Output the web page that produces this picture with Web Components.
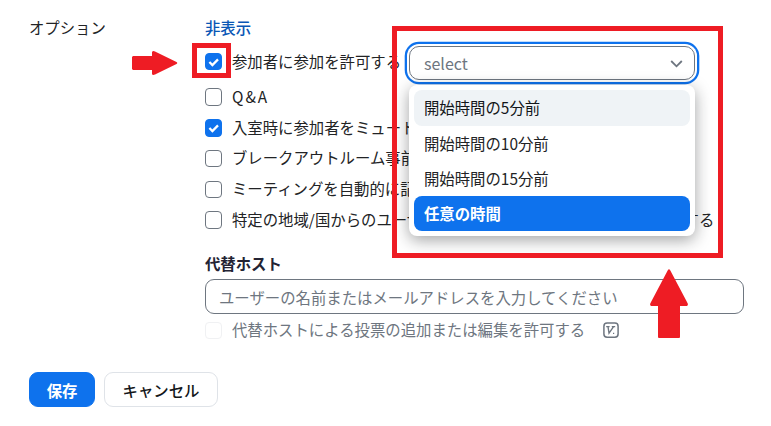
<!DOCTYPE html>
<html lang="ja">
<head>
<meta charset="utf-8">
<title>オプション</title>
<style>
html,body{margin:0;width:771px;height:426px;overflow:hidden;background:#fff}
body{font:15.38px/24px "Noto Sans CJK JP","Noto Sans",sans-serif;color:#222325}
</style>
</head>
<body>
<meeting-options></meeting-options>
<script>
const define = (name, html, init) => customElements.define(name, class extends HTMLElement {
  constructor() {
    super();
    this.attachShadow({mode: 'open'}).innerHTML = html;
    if (init) init.call(this);
  }
});

define('check-row', `<style>
:host{display:flex;align-items:flex-start;height:23px;white-space:nowrap}
.box{box-sizing:border-box;width:17px;height:17px;margin-top:3px;border:1px solid #6e7680;border-radius:4px;background:#fff;margin-right:10px;flex:none}
:host([tall]) .box{height:18px}
svg{display:none;width:17px;height:18px;margin:-1px}
:host([checked]) .box{background:#0e72ed;border-color:#0e72ed}
:host([checked]) svg{display:block}
:host([disabled]){color:#6e7680}
:host([disabled]) .box{border-color:#f0f1f3}
:host([spaced]) .label{letter-spacing:2px}
.label{display:flex;align-items:center;height:24px;margin-top:var(--lift,-1px)}
</style><div class="box"><svg viewBox="0 0 17 18"><path d="M4.4 9 7.4 12 13 6.4" fill="none" stroke="#fff" stroke-width="2.3"/></svg></div><span class="label"><slot></slot></span>`);

define('option-item', `<style>
:host{display:flex;align-items:center;box-sizing:border-box;height:35px;padding:0 10px 1px;border-radius:8px;color:#222325}
:host([hover]){height:36px;padding-bottom:2px;background:#eff3f6;color:#131619}
:host([selected]){background:#0e72ed;color:#fff;font-weight:700}
</style><slot></slot>`);

define('time-select', `<style>
:host{display:block;width:286px}
.field{box-sizing:border-box;height:34px;border:1px solid #6e7680;border-radius:10px;box-shadow:0 0 0 2px #fff,0 0 0 4.3px #0e72ed;background:#fff;display:flex;align-items:center;justify-content:space-between;padding:2px 11px 0 14px;color:#6e7680}
.word{font:16px/24px "Noto Sans CJK JP",sans-serif;margin-top:-2px}
.list{margin-top:5px;box-sizing:border-box;height:151px;border-radius:8px;padding:5px;background:#fff;box-shadow:0 4px 16px rgba(19,22,25,.4)}
</style>
<div class="field"><span class="word">select</span><svg width="13" height="12" viewBox="0 0 13 12"><path d="M1.2 3 6.5 8.3 11.8 3" fill="none" stroke="#6e7680" stroke-width="1.8"/></svg></div>
<div class="list"><slot></slot></div>`);

define('text-field', `<style>
:host{display:flex;align-items:center;box-sizing:border-box;width:539px;height:35px;border:1px solid #6e7680;border-radius:9px;padding:1px 13px 0;color:#6e7680}
</style><slot></slot>`);

define('ui-button', `<style>
:host{display:flex;align-items:center;justify-content:center;box-sizing:border-box;height:35px;padding-top:1px;border-radius:9px;border:1px solid #dfe3e8;width:114px;font-weight:500;color:#131619}
:host([primary]){width:66px;background:#0e72ed;border-color:#0e72ed;color:#fff;font-weight:700}
</style><slot></slot>`);

define('version-icon', `<style>:host{display:block;margin:2px 0 0 18px}svg{display:block}</style>
<svg width="16" height="16" viewBox="0 0 16 16" fill="none" stroke="#6e7680"><rect x=".9" y="1" width="14.2" height="14.2" rx="3.2" stroke-width="1.5"/><path d="M3.2 4.6H6.6M5 4.6 6 11.2 10.6 4.6M8.8 4.6H12.2" stroke-width="1.35"/><path d="M10 11.4h1.2" stroke-width="1.1"/></svg>`);

define('callout-box', `<style>:host{display:block;box-sizing:border-box;border:5px solid #ee1c24;pointer-events:none}</style>`);

define('callout-arrow', `<style>
:host{display:block}svg{display:none}
:host([to=right]) .r,:host([to=up]) .u{display:block}
</style>
<svg class="r" width="46" height="24" fill="#ee1c24"><path d="M1 5H20V1Q21-.5 23 .5L44.5 11Q46 12 44.5 13L23 23.5Q20.5 24.5 20 23V19H1L0 18V6Z"/></svg>
<svg class="u" width="38" height="69" fill="#ee1c24"><path d="M9 69Q8 69 8 68V37H1Q-.5 36 .5 34L17.8 1.2Q19-.9 20.2 1.2L37.5 34Q38.5 36 37 37H30V68Q30 69 29 69Z"/></svg>`);

define('meeting-options', `<style>
:host{display:block;position:relative;width:771px;height:426px}
.form{display:grid;grid-template-columns:176px 539px;padding:15px 0 0 29px}
.link{color:#0956b5;font-weight:500}
.rows{display:grid;grid-template-rows:35px 35px 31px 31px 31px 30px 23px;align-items:start}
.high{--lift:-2px}
.alt{font-weight:700;color:#232333;margin-top:20px;height:28px}
.vote{margin-top:5px}
.buttons{display:flex;gap:9px;padding:30px 0 0 29px}
time-select{position:absolute;left:409px;top:46px}
.b1{position:absolute;left:192px;top:43px;width:39px;height:35px}
.b2{position:absolute;left:392px;top:26px;width:331px;height:232px}
.a1{position:absolute;left:132px;top:51px}
.a2{position:absolute;left:650px;top:269px}
</style>
<div class="form">
 <div>オプション</div>
 <div>
  <div class="rows">
   <div class="link">非表示</div>
   <check-row checked>参加者に参加を許可する</check-row>
   <check-row tall spaced>Q&amp;A</check-row>
   <check-row tall checked>入室時に参加者をミュートする</check-row>
   <check-row class="high">ブレークアウトルーム事前割り当て</check-row>
   <check-row class="high">ミーティングを自動的に記録する</check-row>
   <check-row tall>特定の地域/国からのユーザーのエントリーをブロックまたは許可する</check-row>
  </div>
  <div class="alt">代替ホスト</div>
  <text-field>ユーザーの名前またはメールアドレスを入力してください</text-field>
  <check-row class="vote high" disabled>代替ホストによる投票の追加または編集を許可する<version-icon></version-icon></check-row>
 </div>
</div>
<div class="buttons"><ui-button primary>保存</ui-button><ui-button>キャンセル</ui-button></div>
<time-select>
 <option-item hover>開始時間の5分前</option-item>
 <option-item>開始時間の10分前</option-item>
 <option-item>開始時間の15分前</option-item>
 <option-item selected>任意の時間</option-item>
</time-select>
<callout-box class="b1"></callout-box>
<callout-box class="b2"></callout-box>
<callout-arrow class="a1" to="right"></callout-arrow>
<callout-arrow class="a2" to="up"></callout-arrow>`);
</script>
</body>
</html>
